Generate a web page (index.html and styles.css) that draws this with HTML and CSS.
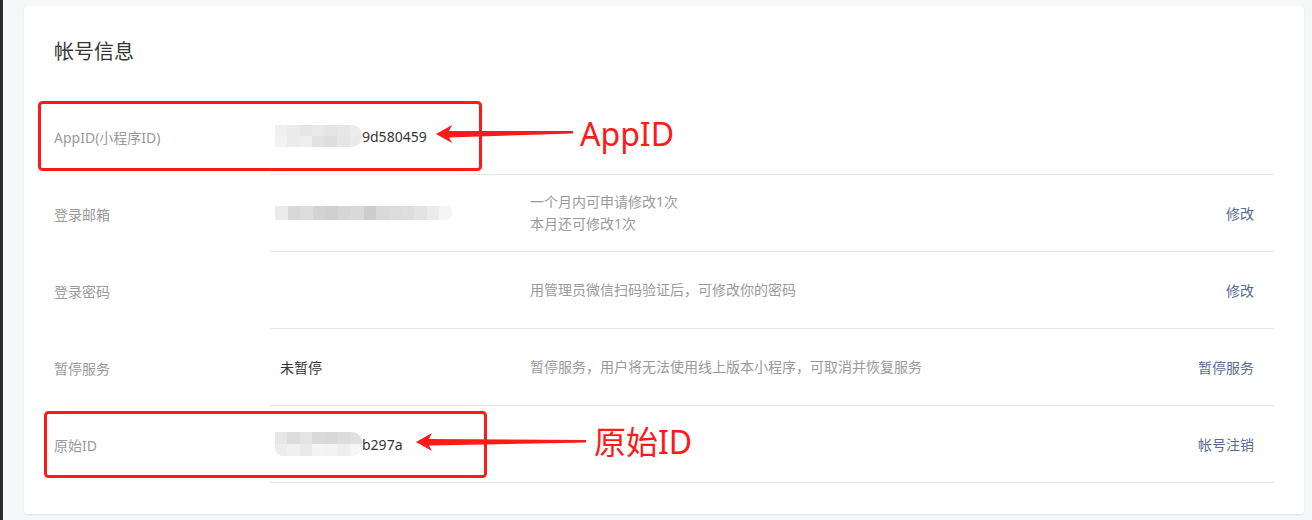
FILE: index.html
```html
<!DOCTYPE html>
<html lang="zh-CN">
<head>
  <meta charset="UTF-8" />
  <title>帐号信息</title>
  <link rel="stylesheet" href="styles.css">
</head>
<body>
  <div class="page">
    <div class="card">
      <h2 class="card-title">帐号信息</h2>

      <div class="info-list">
        <div class="info-row">
          <div class="info-label">AppID(小程序ID)</div>
          <div class="info-body">
            <div class="info-value">
              <span class="mosaic mosaic-id">
                <i style="background:#efefef"></i><i style="background:#ebebeb"></i><i style="background:#e6e6e6"></i><i style="background:#e9e9e9"></i><i style="background:#e4e4e4"></i><i style="background:#e7e7e7"></i><i style="background:#ececec"></i>
                <i style="background:#f2f2f2"></i><i style="background:#ececec"></i><i style="background:#efefef"></i><i style="background:#e2e2e2"></i><i style="background:#dedede"></i><i style="background:#e5e5e5"></i><i style="background:#eaeaea"></i>
              </span>9d580459
            </div>
            <div class="info-desc"></div>
            <div class="info-action"></div>
          </div>
        </div>

        <div class="info-row">
          <div class="info-label">登录邮箱</div>
          <div class="info-body">
            <div class="info-value">
              <span class="mosaic mosaic-mail">
                <i style="background:#ebebeb"></i><i style="background:#d8d8d8"></i><i style="background:#dddddd"></i><i style="background:#d3d3d3"></i><i style="background:#d0d0d0"></i><i style="background:#d6d6d6"></i><i style="background:#dadada"></i><i style="background:#cdcdcd"></i><i style="background:#d9d9d9"></i><i style="background:#dcdcdc"></i><i style="background:#dedede"></i><i style="background:#e3e3e3"></i><i style="background:#ebebeb"></i><i style="background:#f5f5f5"></i>
              </span>
            </div>
            <div class="info-desc">一个月内可申请修改1次<br>本月还可修改1次</div>
            <div class="info-action"><a href="#">修改</a></div>
          </div>
        </div>

        <div class="info-row">
          <div class="info-label">登录密码</div>
          <div class="info-body">
            <div class="info-value"></div>
            <div class="info-desc">用管理员微信扫码验证后，可修改你的密码</div>
            <div class="info-action"><a href="#">修改</a></div>
          </div>
        </div>

        <div class="info-row">
          <div class="info-label">暂停服务</div>
          <div class="info-body">
            <div class="info-value">未暂停</div>
            <div class="info-desc">暂停服务，用户将无法使用线上版本小程序，可取消并恢复服务</div>
            <div class="info-action"><a href="#">暂停服务</a></div>
          </div>
        </div>

        <div class="info-row">
          <div class="info-label">原始ID</div>
          <div class="info-body">
            <div class="info-value">
              <span class="mosaic mosaic-id mosaic-tall">
                <i style="background:#e6e6e6"></i><i style="background:#dcdcdc"></i><i style="background:#e4e4e4"></i><i style="background:#dadada"></i><i style="background:#d8d8d8"></i><i style="background:#dcdcdc"></i><i style="background:#e0e0e0"></i>
                <i style="background:#ececec"></i><i style="background:#f0f0f0"></i><i style="background:#e9e9e9"></i><i style="background:#f4f4f4"></i><i style="background:#f3f3f3"></i><i style="background:#efefef"></i><i style="background:#f6f6f6"></i>
              </span>b297a
            </div>
            <div class="info-desc"></div>
            <div class="info-action"><a href="#">帐号注销</a></div>
          </div>
        </div>
      </div>
    </div>

    <!-- 标注 -->
    <svg class="marks" width="1312" height="520" viewBox="0 0 1312 520">
      <rect x="39.5" y="102.5" width="441" height="67" rx="3" fill="none" stroke="#ff1a1a" stroke-width="3"/>
      <polygon points="436,134 452,125 449,131 573,131 573,133.5 449,137.5 452,143" fill="#ff1a1a"/>
      <text x="580" y="146" class="mark-text">AppID</text>

      <rect x="45.5" y="412.5" width="440" height="64" rx="3" fill="none" stroke="#ff1a1a" stroke-width="3"/>
      <polygon points="416,442 432,433 429,439 586,440 586,442.5 429,445.5 432,451" fill="#ff1a1a"/>
      <text x="594" y="454" class="mark-text">原始ID</text>
    </svg>
  </div>
</body>
</html>
```

FILE: styles.css
```css
html, body {
  margin: 0;
  padding: 0;
  background: #f6f7f9;
  font-family: "Noto Sans", "Noto Sans CJK SC", sans-serif;
  font-size: 14px;
  color: #353535;
}

.page {
  position: relative;
  width: 1312px;
  height: 520px;
  box-sizing: border-box;
  border-left: 3px solid #2b2b2b;
  padding: 6px 8px 0 21px;
}

.card {
  width: 1280px;
  box-sizing: border-box;
  background: #fff;
  border-radius: 4px;
  box-shadow: 0 1px 2px rgba(0, 0, 0, 0.08);
  padding: 30px 30px 31px 30px;
}

.card-title {
  margin: 0 0 30px 0;
  font-size: 20px;
  font-weight: normal;
  line-height: 32px;
  color: #353535;
}

.info-row {
  display: flex;
}

.info-label {
  width: 216px;
  display: flex;
  align-items: center;
  color: #9a9a9a;
}

.info-body {
  flex: 1;
  display: flex;
  align-items: center;
  height: 76px;
  border-bottom: 1px solid #e7e7eb;
  padding: 0 20px 0 10px;
}

.info-value {
  width: 250px;
  display: flex;
  align-items: center;
  color: #353535;
}

.info-desc {
  flex: 1;
  color: #9a9a9a;
  line-height: 22px;
}

.info-action a {
  color: #576b95;
  text-decoration: none;
}

/* 打码区域 */
.mosaic {
  display: grid;
  grid-template-columns: repeat(7, 1fr);
  margin-left: -5px;
  border-radius: 0 10px 10px 0;
  overflow: hidden;
}

.mosaic i {
  display: block;
}

.mosaic-id {
  width: 87px;
  height: 22px;
  grid-template-rows: 11px 11px;
}

.mosaic-tall {
  height: 24px;
  grid-template-rows: 12px 12px;
  border-radius: 0 10px 10px 8px;
}

.mosaic-mail {
  width: 177px;
  height: 14px;
  grid-template-columns: repeat(14, 1fr);
  border-radius: 0 6px 6px 0;
}

.marks {
  position: absolute;
  left: -3px;
  top: 0;
  pointer-events: none;
}

.mark-text {
  font-family: "Noto Sans", "Noto Sans CJK SC", sans-serif;
  font-size: 32px;
  fill: #ff1a1a;
}
```
